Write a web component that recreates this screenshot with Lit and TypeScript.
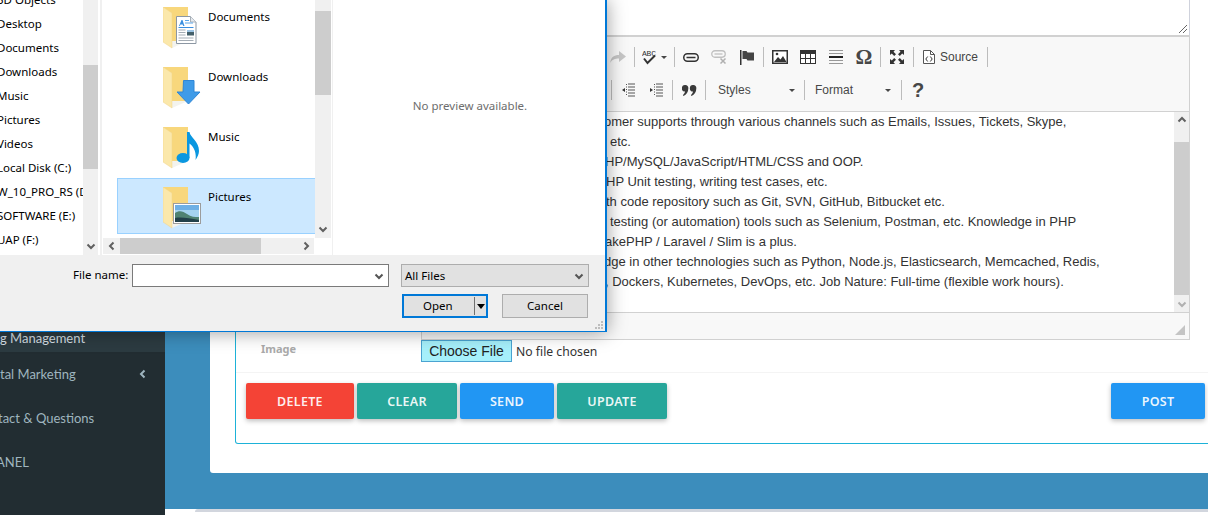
import { LitElement, html, svg, css } from 'lit';
import { customElement } from 'lit/decorators.js';

const NAV_ITEMS = ['3D Objects', 'Desktop', 'Documents', 'Downloads', 'Music', 'Pictures', 'Videos', 'Local Disk (C:)', 'W_10_PRO_RS (D:)', 'SOFTWARE (E:)', 'UAP (F:)'];

const EDITOR_LINES = [
  { x: 604, text: 'omer supports through various channels such as Emails, Issues, Tickets, Skype,' },
  { x: 610, text: 'etc.' },
  { x: 605, text: 'HP/MySQL/JavaScript/HTML/CSS and OOP.' },
  { x: 606, text: 'HP Unit testing, writing test cases, etc.' },
  { x: 606, text: 'th code repository such as Git, SVN, GitHub, Bitbucket etc.' },
  { x: 610, text: 'testing (or automation) tools such as Selenium, Postman, etc. Knowledge in PHP' },
  { x: 605, text: 'akePHP / Laravel / Slim is a plus.' },
  { x: 604, text: 'dge in other technologies such as Python, Node.js, Elasticsearch, Memcached, Redis,' },
  { x: 605, text: ', Dockers, Kubernetes, DevOps, etc. Job Nature: Full-time (flexible work hours).' },
];

const chevron = (dir: 'up' | 'down' | 'left' | 'right', color = '#606060') => {
  const d = { up: 'M1.5 6.5 5 3l3.5 3.5', down: 'M1.5 3.5 5 7l3.5-3.5', left: 'M6.5 1.5 3 5l3.5 3.5', right: 'M3.5 1.5 7 5 3.5 8.5' }[dir];
  return html`<svg width="10" height="10" viewBox="0 0 10 10"><path d=${d} fill="none" stroke=${color} stroke-width="2" /></svg>`;
};

const docOverlay = svg`
  <path d="M13.5 9.5h14l5.5 5.500V36.500h-19.500z" fill="#fff" stroke="#8c97a3" />
  <path d="M27.500 9.500v5.500h5.500" fill="#e6eaee" stroke="#a8b0b8" />
  <path d="M16 19l2.500-6h1l2 6h-1.300l-.5-1.500h-2.300l-.5 1.500z" fill="#3a8fe0" />
  <path d="M22 13.500h4M22 16h8" stroke="#5aa5e8" />
  <path d="M15.500 20.500h15" stroke="#3a8fe0" />
  <path d="M15.500 23h7M15.500 25.500h7M15.500 28h7M15.500 31h15M15.500 33.500h15" stroke="#a5adb5" />
  <rect x="24" y="23" width="7" height="5.500" fill="#44606a" />
  <rect x="24" y="23" width="7" height="2" fill="#9cc4e4" />
`;

const downloadOverlay = svg`
  <path d="M20.500 13.500h10.500v11.500h6l-11.500 12-11.500-12h6z" fill="#3f9be8" stroke="#2f86d6" />
`;

const musicOverlay = svg`
  <ellipse cx="20" cy="31" rx="6.500" ry="5" fill="#0a97e0" />
  <path d="M24 31V5h2.500c1 6 9.500 9 9.500 19 0 3-1.500 6-3.500 9 1-6-1-13-6-16.500V31z" fill="#0a97e0" />
`;

const pictureOverlay = svg`
  <rect x="10.500" y="16.500" width="27" height="20" fill="#fff" stroke="#9c9c9c" />
  <rect x="12" y="18" width="24" height="17" fill="#a5d3f0" />
  <rect x="12" y="18" width="24" height="5" fill="#6fb0e4" />
  <path d="M12 26c4-3 8-2 12 1s8 3 12 3v5H12z" fill="#4f8272" />
  <path d="M12 31c6-1 14 0 24 2v2H12z" fill="#22404a" />
`;

const FILES = [
  { name: 'Documents', overlay: docOverlay, selected: false },
  { name: 'Downloads', overlay: downloadOverlay, selected: false },
  { name: 'Music', overlay: musicOverlay, selected: false },
  { name: 'Pictures', overlay: pictureOverlay, selected: true },
];

const folder = (overlay: unknown) => html`
  <svg class="folder" width="40" height="42" viewBox="0 0 40 42">
    <path d="M0 0h25v34H9z" fill="#f8d77c" />
    <path d="M25 34H6l3 7z" fill="#f3f3ee" />
    <path d="M0 0l9 6v35l-9-6z" fill="#fbe8ab" stroke="#f0d48a" stroke-width=".5" />
    ${overlay}
  </svg>
`;

@customElement('ck-toolbar')
export class CkToolbar extends LitElement {
  static styles = css`
    :host {
      display: block;
      background: #f8f8f8;
      height: 75px;
      box-sizing: border-box;
      color: #444;
      font: 12px "Liberation Sans", Arial, sans-serif;
    }

    .row {
      display: flex;
      align-items: center;
      height: 20px;
    }

    .row-1 {
      padding: 10px 0 0 182px;
    }

    .row-2 {
      padding: 13px 0 0 187px;
    }

    .btn {
      flex: none;
      width: 28px;
      height: 20px;
      display: flex;
      align-items: center;
      justify-content: center;
    }

    .btn.wide {
      width: 35px;
      gap: 3px;
    }

    .sep {
      flex: none;
      width: 1px;
      height: 20px;
      margin: 0 2px;
      background: #bcbcbc;
    }

    .source {
      display: flex;
      align-items: center;
      gap: 5px;
      width: 69px;
      padding-left: 7px;
      box-sizing: border-box;
    }

    .combo {
      flex: none;
      display: flex;
      align-items: center;
      justify-content: space-between;
      box-sizing: border-box;
      color: #484848;
      padding: 0 7px 0 10px;
    }

    .combo.styles {
      width: 94px;
    }

    .combo.format {
      width: 92px;
      padding-left: 8px;
      padding-right: 8px;
    }

    .caret {
      width: 0;
      height: 0;
      border: 3px solid transparent;
      border-top: 3px solid #474747;
      border-bottom: 0;
    }

    .abc {
      font: 8px "Liberation Mono", monospace;
      fill: #333;
    }

    .omega {
      font: bold 21px "Liberation Serif", serif;
      color: #474747;
      line-height: 20px;
    }

    .help {
      font: bold 20px "Liberation Sans", Arial, sans-serif;
      color: #474747;
      line-height: 20px;
    }
  `;

  render() {
    return html`
      <div class="row row-1">
        <span class="btn"><svg width="16" height="14" viewBox="0 0 16 14"><path d="M0 13C1 7 4 5 9 5V1l7 5.500-7 5.500V8.500C5 8.500 2 9.500 0 13z" fill="#c6c6c6" /></svg></span>
        <span class="sep"></span>
        <span class="btn wide">
          <svg width="16" height="16" viewBox="0 0 16 16">
            <text class="abc" x="0" y="7" textLength="14">ABC</text>
            <path d="M2 9.500l3.500 4.500L13 6.500" fill="none" stroke="#333" stroke-width="2" />
          </svg>
          <span class="caret"></span>
        </span>
        <span class="sep"></span>
        <span class="btn"><svg width="16" height="9" viewBox="0 0 16 9"><rect x=".75" y=".75" width="14.500" height="7.500" rx="3.700" fill="none" stroke="#333" stroke-width="1.500" /><path d="M3.500 4.500h9" stroke="#333" stroke-width="1.500" /></svg></span>
        <span class="btn"><svg width="16" height="14" viewBox="0 0 16 14"><rect x=".75" y=".75" width="13.500" height="6.500" rx="3.200" fill="none" stroke="#c0c0c0" stroke-width="1.300" /><path d="M3.500 4h8" stroke="#c0c0c0" stroke-width="1.300" /><path d="M9.500 8.500l5 5M14.500 8.500l-5 5" stroke="#b0b0b0" stroke-width="1.500" /></svg></span>
        <span class="btn"><svg width="14" height="15" viewBox="0 0 14 15"><path d="M.75 0v15" stroke="#333" stroke-width="1.500" /><path d="M2.500 1h4l1 1.500h6.500v8H7.500l-1-1.500h-4z" fill="#444" /></svg></span>
        <span class="sep"></span>
        <span class="btn"><svg width="16" height="14" viewBox="0 0 16 14"><rect x=".75" y=".75" width="14.500" height="12.500" fill="#fff" stroke="#333" stroke-width="1.500" /><path d="M2 12l4-5 2.500 2.500L11 6l3.500 6z" fill="#333" /><circle cx="5" cy="4" r="1.300" fill="#333" /></svg></span>
        <span class="btn"><svg width="16" height="14" viewBox="0 0 16 14"><rect x=".5" y=".5" width="15" height="13" fill="#fff" stroke="#333" /><rect x="0" y="0" width="16" height="4" fill="#333" /><path d="M5.500 4v10M10.500 4v10M0 8.500h16" stroke="#333" /></svg></span>
        <span class="btn"><svg width="16" height="15" viewBox="0 0 16 15"><path d="M1 .5h14M1 3.500h14M1 10.500h14M1 13.500h14" stroke="#999" /><path d="M1 7h14" stroke="#222" stroke-width="2" /></svg></span>
        <span class="btn omega">Ω</span>
        <span class="sep"></span>
        <span class="btn"><svg width="14" height="14" viewBox="0 0 14 14"><path d="M0 0h5L3.500 1.800 6 4.200 4.200 6 1.800 3.500 0 5zM14 0v5l-1.800-1.500L9.800 6 8 4.200l2.500-2.400L9 0zM0 14V9l1.800 1.500L4.200 8 6 9.800l-2.500 2.400L5 14zM14 14H9l1.500-1.800L8 9.800 9.800 8l2.400 2.500L14 9z" fill="#333" /></svg></span>
        <span class="sep"></span>
        <span class="source">
          <svg width="12" height="14" viewBox="0 0 12 14"><path d="M.5.500h7l4 4v9h-11z" fill="#fff" stroke="#555" /><path d="M7.500.5v4h4" fill="none" stroke="#555" /><path d="M4.700 6.500 2.800 9l1.900 2.500M7.300 6.500 9.200 9l-1.900 2.500" fill="none" stroke="#333" /></svg>
          <span>Source</span>
        </span>
        <span class="sep"></span>
      </div>
      <div class="row row-2">
        <span class="sep"></span>
        <span class="btn"><svg width="14" height="14" viewBox="0 0 14 14"><path d="M7 1h7M7 4h7M7 7h7M7 10h7M7 13h7" stroke="#555" /><path d="M5.500 1v1M5.500 3.500v1M5.500 6v1M5.500 8.500v1M5.500 11v1" stroke="#555" /><path d="M4 5l-3 2 3 2z" fill="#333" /></svg></span>
        <span class="btn"><svg width="14" height="14" viewBox="0 0 14 14"><path d="M7 1h7M7 4h7M7 7h7M7 10h7M7 13h7" stroke="#555" /><path d="M5.500 1v1M5.500 3.500v1M5.500 6v1M5.500 8.500v1M5.500 11v1" stroke="#555" /><path d="M1 5l3 2-3 2z" fill="#333" /></svg></span>
        <span class="sep"></span>
        <span class="btn"><svg width="15" height="11" viewBox="0 0 15 11"><path d="M3.300 0a3 3 0 0 1 3 3.500C6.300 7 4.500 9.500 1.500 11L.9 10c1.300-1 1.900-2 2.100-3.400A3.200 3.200 0 0 1 3.300 0zM11.300 0a3 3 0 0 1 3 3.500c0 3.500-1.800 6-4.800 7.500l-.6-1c1.300-1 1.900-2 2.100-3.400A3.200 3.200 0 0 1 11.300 0z" fill="#3a3a3a" /></svg></span>
        <span class="sep"></span>
        <span class="combo styles"><span>Styles</span><span class="caret"></span></span>
        <span class="sep"></span>
        <span class="combo format"><span>Format</span><span class="caret"></span></span>
        <span class="sep"></span>
        <span class="btn help">?</span>
      </div>
    `;
  }
}

@customElement('file-dialog')
export class FileDialog extends LitElement {
  static styles = css`
    :host {
      position: absolute;
      left: -4px;
      top: 0;
      width: 611px;
      height: 332px;
      box-sizing: border-box;
      display: flex;
      flex-direction: column;
      background: #f0f0f0;
      border: 1px solid #0078d7;
      border-top: 0;
      border-right-width: 2px;
      box-shadow: 0 0 18px rgba(0, 0, 0, 0.4);
      color: #000;
      font: 11.5px "Noto Sans", "Open Sans", sans-serif;
      overflow: hidden;
      z-index: 5;
    }

    .panes {
      display: flex;
      height: 255px;
      background: #fff;
      flex: none;
    }

    .nav {
      flex: none;
      width: 105px;
      display: flex;
      overflow: hidden;
    }

    .nav-list {
      width: 86px;
      flex: none;
      margin-top: -12px;
      white-space: nowrap;
      overflow: hidden;
    }

    .nav-item {
      height: 24px;
      line-height: 24px;
    }

    .vbar {
      flex: none;
      display: flex;
      flex-direction: column;
      background: #f0f0f0;
    }

    .nav .vbar {
      width: 15px;
      padding-top: 65px;
      box-sizing: border-box;
    }

    .nav .vbar .thumb {
      height: 104px;
    }

    .thumb {
      background: #cdcdcd;
    }

    .vbar .arrow {
      margin-top: auto;
      height: 18px;
      display: flex;
      align-items: center;
      justify-content: center;
    }

    .splitter {
      flex: none;
      width: 2px;
      margin-left: -2px;
      background: #f0f0f0;
    }

    .files {
      flex: none;
      width: 230px;
      display: flex;
      flex-direction: column;
    }

    .files-top {
      display: flex;
      height: 238px;
    }

    .file-rows {
      flex: none;
      width: 213px;
      overflow: hidden;
    }

    .file-row {
      box-sizing: border-box;
      height: 56px;
      margin: 0 0 4px 15px;
      padding: 9px 0 0 46px;
      display: flex;
      gap: 5px;
      border: 1px solid transparent;
      border-right: 0;
    }

    .file-row:first-child {
      margin-top: -2px;
    }

    .file-row.selected {
      background: #cce8ff;
      border-color: #99d1ff;
    }

    .folder {
      flex: none;
      margin: -1px 0 0 -1px;
    }

    .file-name {
      margin-top: 1px;
    }

    .files .vbar {
      width: 16px;
      padding-top: 11px;
      box-sizing: border-box;
    }

    .files .vbar .thumb {
      height: 84px;
    }

    .hbar {
      margin-left: 1px;
      width: 211px;
      height: 16px;
      background: #f0f0f0;
      display: flex;
      align-items: center;
    }

    .hbar .arrow {
      flex: none;
      width: 17px;
      display: flex;
      justify-content: center;
    }

    .hbar .thumb {
      width: 141px;
      height: 16px;
    }

    .hbar .end {
      margin-left: auto;
    }

    .preview {
      flex: 1;
      border-left: 1px solid #f0f0f0;
      text-align: center;
      padding: 98px 0 0 2px;
      color: #6d6d6d;
    }

    .bottom {
      flex: 1;
      position: relative;
    }

    .name-row {
      display: flex;
      align-items: flex-start;
      padding: 9px 0 0 76px;
    }

    .name-label {
      width: 58px;
      line-height: 22px;
      flex: none;
      white-space: nowrap;
    }

    .name-input {
      flex: none;
      width: 257px;
      height: 23px;
      margin-left: 1px;
      box-sizing: border-box;
      border: 1px solid #7a7a7a;
      background: #fff;
      display: flex;
      align-items: center;
      justify-content: flex-end;
      padding-right: 4px;
    }

    .filter {
      flex: none;
      width: 188px;
      height: 23px;
      margin-left: 12px;
      box-sizing: border-box;
      border: 1px solid #adadad;
      background: #e1e1e1;
      display: flex;
      align-items: center;
      justify-content: space-between;
      padding: 0 4px 0 3px;
    }

    .actions {
      display: flex;
      padding: 7px 0 0 405px;
    }

    .push {
      flex: none;
      width: 86px;
      height: 24px;
      box-sizing: border-box;
      background: #e1e1e1;
      border: 1px solid #adadad;
      padding-bottom: 2px;
      display: flex;
      align-items: center;
      justify-content: center;
    }

    .push.open {
      border: 2px solid #0078d7;
      justify-content: flex-start;
      padding: 0 0 0 19px;
    }

    .push.open .label {
      margin-top: -2px;
    }

    .push.cancel {
      margin-left: 14px;
    }

    .split {
      width: 1px;
      height: 18px;
      background: #707070;
      margin-left: 21px;
    }

    .split-caret {
      margin-left: 2px;
      width: 0;
      height: 0;
      border: 4px solid transparent;
      border-top: 5px solid #000;
      border-bottom: 0;
    }

    .grip {
      position: absolute;
      right: 1px;
      bottom: 1px;
    }
  `;

  render() {
    return html`
      <div class="panes">
        <div class="nav">
          <div class="nav-list">
            ${NAV_ITEMS.map((item) => html`<div class="nav-item">${item}</div>`)}
          </div>
          <div class="vbar">
            <div class="thumb"></div>
            <div class="arrow">${chevron('down')}</div>
          </div>
        </div>
        <div class="splitter"></div>
        <div class="files">
          <div class="files-top">
            <div class="file-rows">
              ${FILES.map((f) => html`
                <div class="file-row ${f.selected ? 'selected' : ''}">
                  ${folder(f.overlay)}
                  <span class="file-name">${f.name}</span>
                </div>
              `)}
            </div>
            <div class="vbar">
              <div class="thumb"></div>
              <div class="arrow">${chevron('down')}</div>
            </div>
          </div>
          <div class="hbar">
            <span class="arrow">${chevron('left')}</span>
            <div class="thumb"></div>
            <span class="arrow end">${chevron('right')}</span>
          </div>
        </div>
        <div class="preview">No preview available.</div>
      </div>
      <div class="bottom">
        <div class="name-row">
          <span class="name-label">File name:</span>
          <span class="name-input">${chevron('down', '#555')}</span>
          <span class="filter"><span>All Files</span>${chevron('down', '#555')}</span>
        </div>
        <div class="actions">
          <span class="push open"><span class="label">Open</span><span class="split"></span><span class="split-caret"></span></span>
          <span class="push cancel">Cancel</span>
        </div>
        <svg class="grip" width="10" height="10" viewBox="0 0 10 10">
          <path d="M7 1h2v2H7zM4 4h2v2H4zM7 4h2v2H7zM1 7h2v2H1zM4 7h2v2H4zM7 7h2v2H7z" fill="#bdbdbd" />
        </svg>
      </div>
    `;
  }
}

@customElement('app-root')
export class AppRoot extends LitElement {
  static styles = css`
    :host {
      display: block;
      position: relative;
      width: 1208px;
      height: 515px;
      overflow: hidden;
      background: #fff;
      font-family: "Noto Sans", "Open Sans", sans-serif;
    }

    .layout {
      display: flex;
      height: 515px;
    }

    .sidebar {
      flex: none;
      width: 165px;
      box-sizing: border-box;
      padding-top: 325px;
      background: #222d32;
      color: #9fb5bf;
      font: 13px Lato, "Noto Sans", sans-serif;
      overflow: hidden;
      white-space: nowrap;
    }

    .menu-item {
      height: 44px;
      display: flex;
      align-items: center;
      justify-content: space-between;
      padding-right: 17px;
    }

    .menu-item.active {
      box-sizing: border-box;
      height: 27px;
      padding-bottom: 2px;
      background: #2c3b41;
      color: #d5dfe4;
    }

    .menu-item .shift {
      margin-left: -4px;
    }

    .menu-item .nudge {
      margin-left: -2px;
    }

    .content {
      flex: 1;
      min-width: 0;
      display: flex;
      flex-direction: column;
    }

    .blue {
      height: 509px;
      flex: none;
      background: #3c8dbc;
      padding-left: 45px;
      overflow: hidden;
    }

    .footer {
      margin-left: 30px;
      border-top: 3px solid #d2d6de;
      border-top-left-radius: 3px;
    }

    .card {
      height: 473px;
      box-sizing: border-box;
      background: #fff;
      border-bottom-left-radius: 3px;
      padding-left: 25px;
    }

    .panel {
      box-sizing: border-box;
      width: 1000px;
      height: 444px;
      border: 1px solid #1db2d8;
      border-top: 0;
      border-radius: 0 0 3px 3px;
    }

    .form {
      padding-left: 185px;
    }

    .textarea {
      box-sizing: border-box;
      position: relative;
      width: 769px;
      height: 36px;
      border-right: 1px solid #cfd2dc;
      border-bottom: 1px solid #d1d1d1;
    }

    .resize {
      position: absolute;
      right: 1px;
      bottom: 1px;
    }

    .editor {
      box-sizing: border-box;
      width: 769px;
      height: 304px;
      border: 1px solid #d1d1d1;
      display: flex;
      flex-direction: column;
    }

    ck-toolbar {
      border-bottom: 1px solid #d1d1d1;
      flex: none;
    }

    .body {
      display: flex;
      height: 200px;
      flex: none;
    }

    .body-text {
      flex: 1;
      font: 13px/20px "Liberation Sans", Arial, sans-serif;
      color: #333;
      white-space: nowrap;
      overflow: hidden;
    }

    .body-bar {
      flex: none;
      width: 15px;
      display: flex;
      flex-direction: column;
      background: #f0f0f0;
    }

    .body-bar .cap {
      height: 17px;
      display: flex;
      align-items: center;
      justify-content: center;
    }

    .body-bar .thumb {
      height: 155px;
      margin-top: 13px;
      background: #cdcdcd;
    }

    .body-bar .cap.down {
      margin-top: auto;
    }

    .status {
      flex: 1;
      background: #f8f8f8;
      border-top: 1px solid #d1d1d1;
      display: flex;
      justify-content: flex-end;
      align-items: flex-end;
      padding: 0 4px 4px 0;
    }

    .file-row {
      display: flex;
      height: 32px;
      margin-left: -160px;
      font-size: 12.2px;
      color: #333;
    }

    .file-label {
      width: 160px;
      padding-top: 2px;
      font-weight: 700;
      font-size: 11px;
      color: #aaa;
      line-height: 14px;
    }

    .choose {
      box-sizing: border-box;
      width: 91px;
      height: 22px;
      background: #a6f0fb;
      border: 1px solid #4aa3d1;
      color: #222;
      font: 14px/20px "Liberation Sans", Arial, sans-serif;
      text-align: center;
    }

    .no-file {
      margin: 3px 0 0 4px;
      line-height: 18px;
    }

    .actions {
      border-top: 1px solid #f4f4f4;
      display: flex;
      padding: 10px 0 0 10px;
      gap: 3px;
    }

    .action {
      flex: none;
      height: 36px;
      border-radius: 2px;
      color: rgba(255, 255, 255, 0.92);
      font: 600 12.500px/37px "Noto Sans", sans-serif;
      letter-spacing: 0.3px;
      text-align: center;
      box-shadow: 0 2px 5px rgba(0, 0, 0, 0.26);
    }

    .red { background: #f44336; }
    .teal { background: #26a69a; }
    .blue-btn { background: #2196f3; }

    .post {
      margin-left: auto;
      margin-right: 29px;
    }
  `;

  render() {
    return html`
      <div class="layout">
        <nav class="sidebar">
          <div class="menu-item active"><span>g Management</span></div>
          <div class="menu-item"><span>tal Marketing</span>${chevron('left', '#9fb5bf')}</div>
          <div class="menu-item"><span class="nudge">tact &amp; Questions</span></div>
          <div class="menu-item"><span class="shift">ANEL</span></div>
        </nav>
        <div class="content">
          <div class="blue">
            <div class="card">
              <div class="panel">
                <div class="form">
                  <div class="textarea">
                    <svg class="resize" width="9" height="9" viewBox="0 0 9 9"><path d="M0 8 8 0M4 8l4-4" stroke="#666" /></svg>
                  </div>
                  <div class="editor">
                    <ck-toolbar></ck-toolbar>
                    <div class="body">
                      <div class="body-text">
                        ${EDITOR_LINES.map((l) => html`<div style="padding-left:${l.x - 422}px">${l.text}</div>`)}
                      </div>
                      <div class="body-bar">
                        <span class="cap">${chevron('up')}</span>
                        <div class="thumb"></div>
                        <span class="cap down">${chevron('down', '#b0b0b0')}</span>
                      </div>
                    </div>
                    <div class="status">
                      <svg width="10" height="10" viewBox="0 0 10 10"><path d="M10 0v10H0z" fill="#c4c4c4" /></svg>
                    </div>
                  </div>
                  <div class="file-row">
                    <span class="file-label">Image</span>
                    <span class="choose">Choose File</span>
                    <span class="no-file">No file chosen</span>
                  </div>
                </div>
                <div class="actions">
                  <span class="action red" style="width:108px">DELETE</span>
                  <span class="action teal" style="width:100px">CLEAR</span>
                  <span class="action blue-btn" style="width:94px">SEND</span>
                  <span class="action teal" style="width:110px">UPDATE</span>
                  <span class="action blue-btn post" style="width:94px">POST</span>
                </div>
              </div>
            </div>
          </div>
          <div class="footer"></div>
        </div>
      </div>
      <file-dialog></file-dialog>
    `;
  }
}
